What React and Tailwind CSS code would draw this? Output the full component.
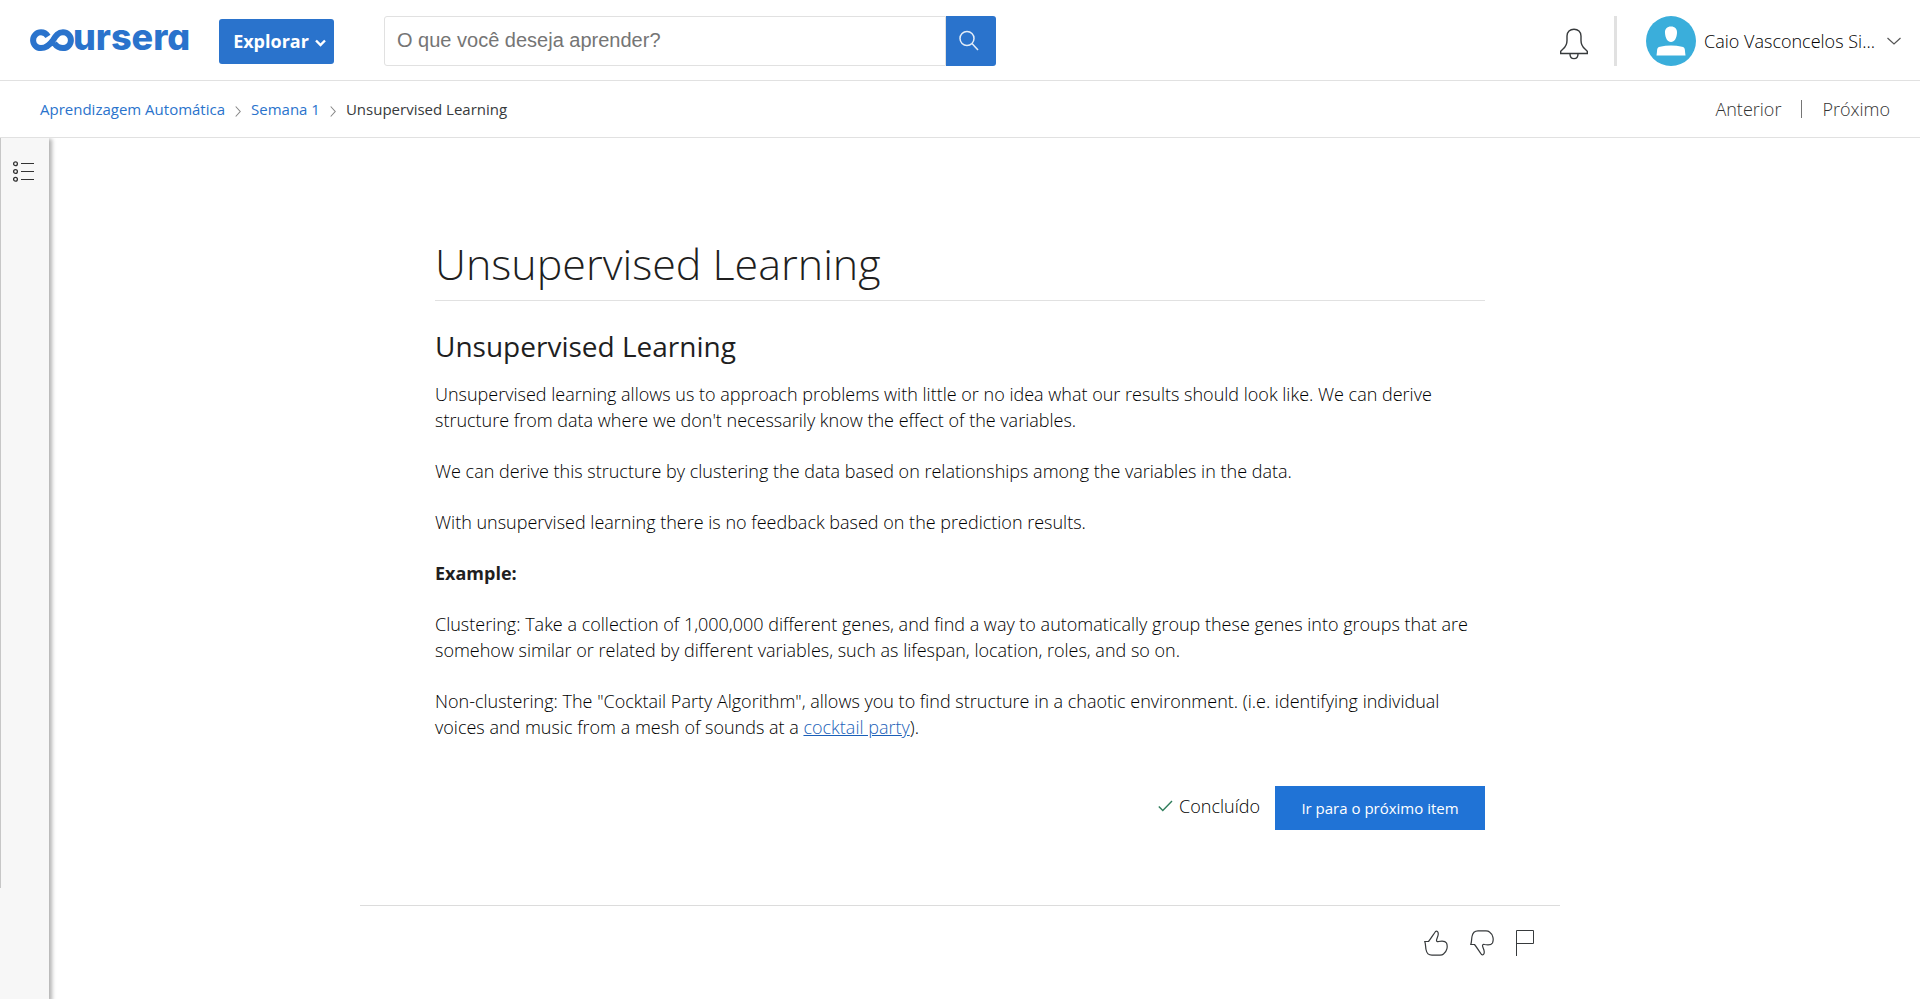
import React from "react";

function CourseraLogo() {
  return (
    <svg width="170" height="56" viewBox="0 -8 170 56" aria-hidden="true">
      <path
        transform="translate(0 2)"
        d="M19 13.300C17 10.300 14.500 9.300 12 9.300A7.900 7.900 0 0 0 12 25.100C18 25.100 21 21.500 24 17.200C27 12.500 29 9.300 34 9.300A7.900 7.900 0 0 1 34 25.100C29.500 25.100 27.200 23 25.200 20.300"
        fill="none"
        stroke="#2a73cc"
        strokeWidth="6"
      />
      <text
        x="44"
        y="29"
        fill="#2a73cc"
        fontFamily="Inter, sans-serif"
        fontWeight="800"
        fontSize="36"
        style={{ fontFeatureSettings: '"cv11", "ss03"' }}
      >
        ursera
      </text>
    </svg>
  );
}

function Header() {
  return (
    <header className="flex h-[81px] items-center border-b border-[#e1e1e1] pl-[29px] pr-[19px] pt-0.5">
      <a href="#home" aria-label="Coursera" className="shrink-0">
        <CourseraLogo />
      </a>
      <button className="ml-5 flex h-[45px] w-[115px] shrink-0 items-center justify-center gap-1.5 rounded-[3px] bg-[#2a73cc] pl-1.5 text-[18px] font-bold text-white">
        Explorar
        <svg className="mt-1" width="11" height="8" viewBox="0 0 11 8" aria-hidden="true">
          <path d="M1 1.500L5.500 6L10 1.500" fill="none" stroke="white" strokeWidth="2.400" />
        </svg>
      </button>
      <form className="ml-[50px] flex h-[50px] w-[612px]" onSubmit={(e) => e.preventDefault()}>
        <input
          type="text"
          aria-label="O que você deseja aprender?"
          placeholder="O que você deseja aprender?"
          className="min-w-0 grow rounded-l-[3px] border border-[#e1e1e1] px-3 pb-0.5 font-['Liberation_Sans',sans-serif] text-[20px] placeholder:text-[#757575]"
        />
        <button
          aria-label="Buscar"
          className="flex w-[50px] shrink-0 items-center justify-center rounded-r-[3px] bg-[#2a73cc] pr-1"
        >
          <svg width="22" height="22" viewBox="0 0 22 22" fill="none" stroke="#e4edf8" strokeWidth="1.500" aria-hidden="true">
            <circle cx="9" cy="8.500" r="7" />
            <path d="M14 13.500L20 20" />
          </svg>
        </button>
      </form>
      <div className="ml-auto flex shrink-0 items-center">
        <button aria-label="Notificações" className="mt-1.5">
          <svg width="30" height="32" viewBox="0 0 30 32" fill="none" stroke="#373a3c" strokeWidth="1.400" aria-hidden="true">
            <path d="M1.700 25.500V23.300L4 21C7.500 18 8 16 8 12.500V8C8 4 11 1.200 15 1.200S22 4 22 8V12.500C22 16 22.500 18 26 21L28.300 23.300V25.500Z" />
            <path d="M11 26C11 32.200 19 32.200 19 26" />
          </svg>
        </button>
        <div className="ml-[25px] h-[50px] w-[3px] bg-[#e1e1e1]" />
        <button className="ml-[29px] flex items-center text-[18px] font-light text-black">
          <svg width="50" height="50" viewBox="0 0 50 50" aria-hidden="true">
            <circle cx="25" cy="25" r="25" fill="#3aaedb" />
            <path d="M25 10.500C29 10.500 31.300 13 31 17C30.700 22 28.500 26 25 26S19.300 22 19 17C18.700 13 21 10.500 25 10.500Z" fill="white" />
            <path d="M10.500 39.500L11.200 33.500C11.500 31.800 12.500 31.200 14 30.800C21 29 29 29 36 30.800C37.500 31.200 38.500 31.800 38.800 33.500L39.500 39.500Z" fill="white" />
          </svg>
          <span className="ml-2">Caio Vasconcelos Si...</span>
          <svg className="ml-3" width="14" height="8" viewBox="0 0 14 8" aria-hidden="true">
            <path d="M0.500 1L7 7L13.500 1" fill="none" stroke="#555" strokeWidth="1.200" />
          </svg>
        </button>
      </div>
    </header>
  );
}

function Crumb() {
  return (
    <svg className="mt-1 shrink-0" width="6" height="11" viewBox="0 0 6 11" aria-hidden="true">
      <path d="M0.700 0.500L5.200 5.500L0.700 10.500" fill="none" stroke="#888" strokeWidth="1.100" />
    </svg>
  );
}

function Breadcrumbs() {
  return (
    <div className="flex h-[57px] items-center justify-between border-b border-[#e1e1e1] pl-10 pr-[30px]">
      <nav aria-label="Trilha" className="flex items-center gap-[10px] text-[15px] text-[#2a73cc]">
        <a href="#curso">Aprendizagem Automática</a>
        <Crumb />
        <a href="#semana">Semana 1</a>
        <Crumb />
        <span className="text-[#373a3c]">Unsupervised Learning</span>
      </nav>
      <nav aria-label="Itens" className="flex items-center text-[18px] font-light text-[#333]">
        <a href="#anterior">Anterior</a>
        <span className="mx-5 h-[18px] w-px bg-[#757575]" />
        <a href="#proximo">Próximo</a>
      </nav>
    </div>
  );
}

function Sidebar() {
  return (
    <aside className="flex w-[49px] shrink-0 items-start bg-[#f7f7f7] shadow-[2px_2px_4px_1px_rgba(0,0,0,0.3)]">
      <div className="h-[750px] w-px shrink-0 bg-[#c7c7c7]" />
      <button aria-label="Abrir menu" className="ml-[11px] mt-[22px]">
        <svg width="24" height="24" viewBox="0 0 24 24" fill="none" stroke="#333" aria-hidden="true">
          <g strokeWidth="1.300">
            <circle cx="3.500" cy="3.800" r="1.900" />
            <circle cx="3.500" cy="11.500" r="1.900" />
            <circle cx="3.500" cy="19.200" r="1.900" />
          </g>
          <path d="M9 3.500H22M9 11.500H22M9 19.500H22" />
        </svg>
      </button>
    </aside>
  );
}

function ThumbUp() {
  return (
    <svg width="24" height="26" viewBox="0 0 24 26" fill="none" stroke="#373a3c" strokeWidth="1.200" aria-hidden="true">
      <path d="M0.800 11.500H4.500C7 8.500 9 5 11.500 1.500C13 0.500 14.500 2 14.200 4.500C14 7 12.500 8.500 12.500 10.500C12.500 11.500 13.500 12 14.500 11.500C17 11 21 10.500 22.500 13C24 16.500 23 21.500 19.500 24C18.500 25 17.500 25.200 16 25.200H8C4.500 25.200 2.500 22.500 2 19.500C1.500 17 1.700 14 0.800 11.500Z" />
    </svg>
  );
}

function ThumbDown() {
  return (
    <svg width="24" height="26" viewBox="0 0 24 26" fill="none" stroke="#373a3c" strokeWidth="1.200" aria-hidden="true">
      <path d="M0.800 14.500H4.500C7 17.500 9 21 11.500 24.500C13 25.500 14.500 24 14.200 21.500C14 19 12.500 17.500 12.500 15.500C12.500 14.500 13.500 14 14.500 14.500C17 15 21 15.500 22.500 13C24 9.500 23 4.500 19.500 2C18.500 1 17.500 0.800 16 0.800H8C4.500 0.800 2.500 3.500 2 6.500C1.500 9 1.700 12 0.800 14.500Z" />
    </svg>
  );
}

function Article() {
  return (
    <article className="mx-auto w-full max-w-[1050px] text-[18px] font-light leading-[26px] text-black">
      <h1 className="border-b border-[#e1e1e1] pb-[7px] text-[43px] font-light leading-[58px] text-[#1f1f1f]">
        Unsupervised Learning
      </h1>
      <h2 className="mt-[26px] text-[28px] font-normal leading-[38px] text-[#1f1f1f]">
        Unsupervised Learning
      </h2>
      <div className="mt-4 flex flex-col gap-[25px]">
        <p>
          Unsupervised learning allows us to approach problems with little or no idea what our
          results should look like. We can derive structure from data where we don't necessarily
          know the effect of the variables.
        </p>
        <p>
          We can derive this structure by clustering the data based on relationships among the
          variables in the data.
        </p>
        <p>With unsupervised learning there is no feedback based on the prediction results.</p>
        <p className="font-bold text-[#1f1f1f]">Example:</p>
        <p>
          Clustering: Take a collection of 1,000,000 different genes, and find a way to
          automatically group these genes into groups that are somehow similar or related by
          different variables, such as lifespan, location, roles, and so on.
        </p>
        <p>
          Non-clustering: The "Cocktail Party Algorithm", allows you to find structure in a chaotic
          environment. (i.e. identifying individual voices and music from a mesh of sounds at a{" "}
          <a href="#cocktail" className="text-[#1a5fb8] underline">
            cocktail party
          </a>
          ).
        </p>
      </div>
      <div className="mt-[46px] flex items-center justify-end">
        <svg className="mb-1 mr-1.5" width="15" height="12" viewBox="0 0 15 12" aria-hidden="true">
          <path d="M0.800 6.500L4.800 10.500L14 1" fill="none" stroke="#2f7d5b" strokeWidth="1.400" />
        </svg>
        <span className="mb-1">Concluído</span>
        <button className="ml-[15px] h-11 w-[210px] bg-[#2073d6] text-[15px] font-medium text-white">
          Ir para o próximo item
        </button>
      </div>
    </article>
  );
}

export default function App() {
  return (
    <div className="flex min-h-screen flex-col bg-white font-['Open_Sans',sans-serif]">
      <Header />
      <Breadcrumbs />
      <div className="flex grow overflow-hidden">
        <Sidebar />
        <main className="grow pr-[49px] pt-[97px]">
          <Article />
          <div className="mx-auto mt-[75px] flex max-w-[1200px] justify-end gap-[22px] border-t border-[#dcdcdc] pr-[25px] pt-6">
            <button aria-label="Gostei">
              <ThumbUp />
            </button>
            <button aria-label="Não gostei">
              <ThumbDown />
            </button>
            <button aria-label="Denunciar">
              <svg width="19" height="26" viewBox="0 0 19 26" fill="none" stroke="#373a3c" aria-hidden="true">
                <path d="M0.500 26V0.500H17.500V13.500H0.500" />
              </svg>
            </button>
          </div>
        </main>
      </div>
    </div>
  );
}
